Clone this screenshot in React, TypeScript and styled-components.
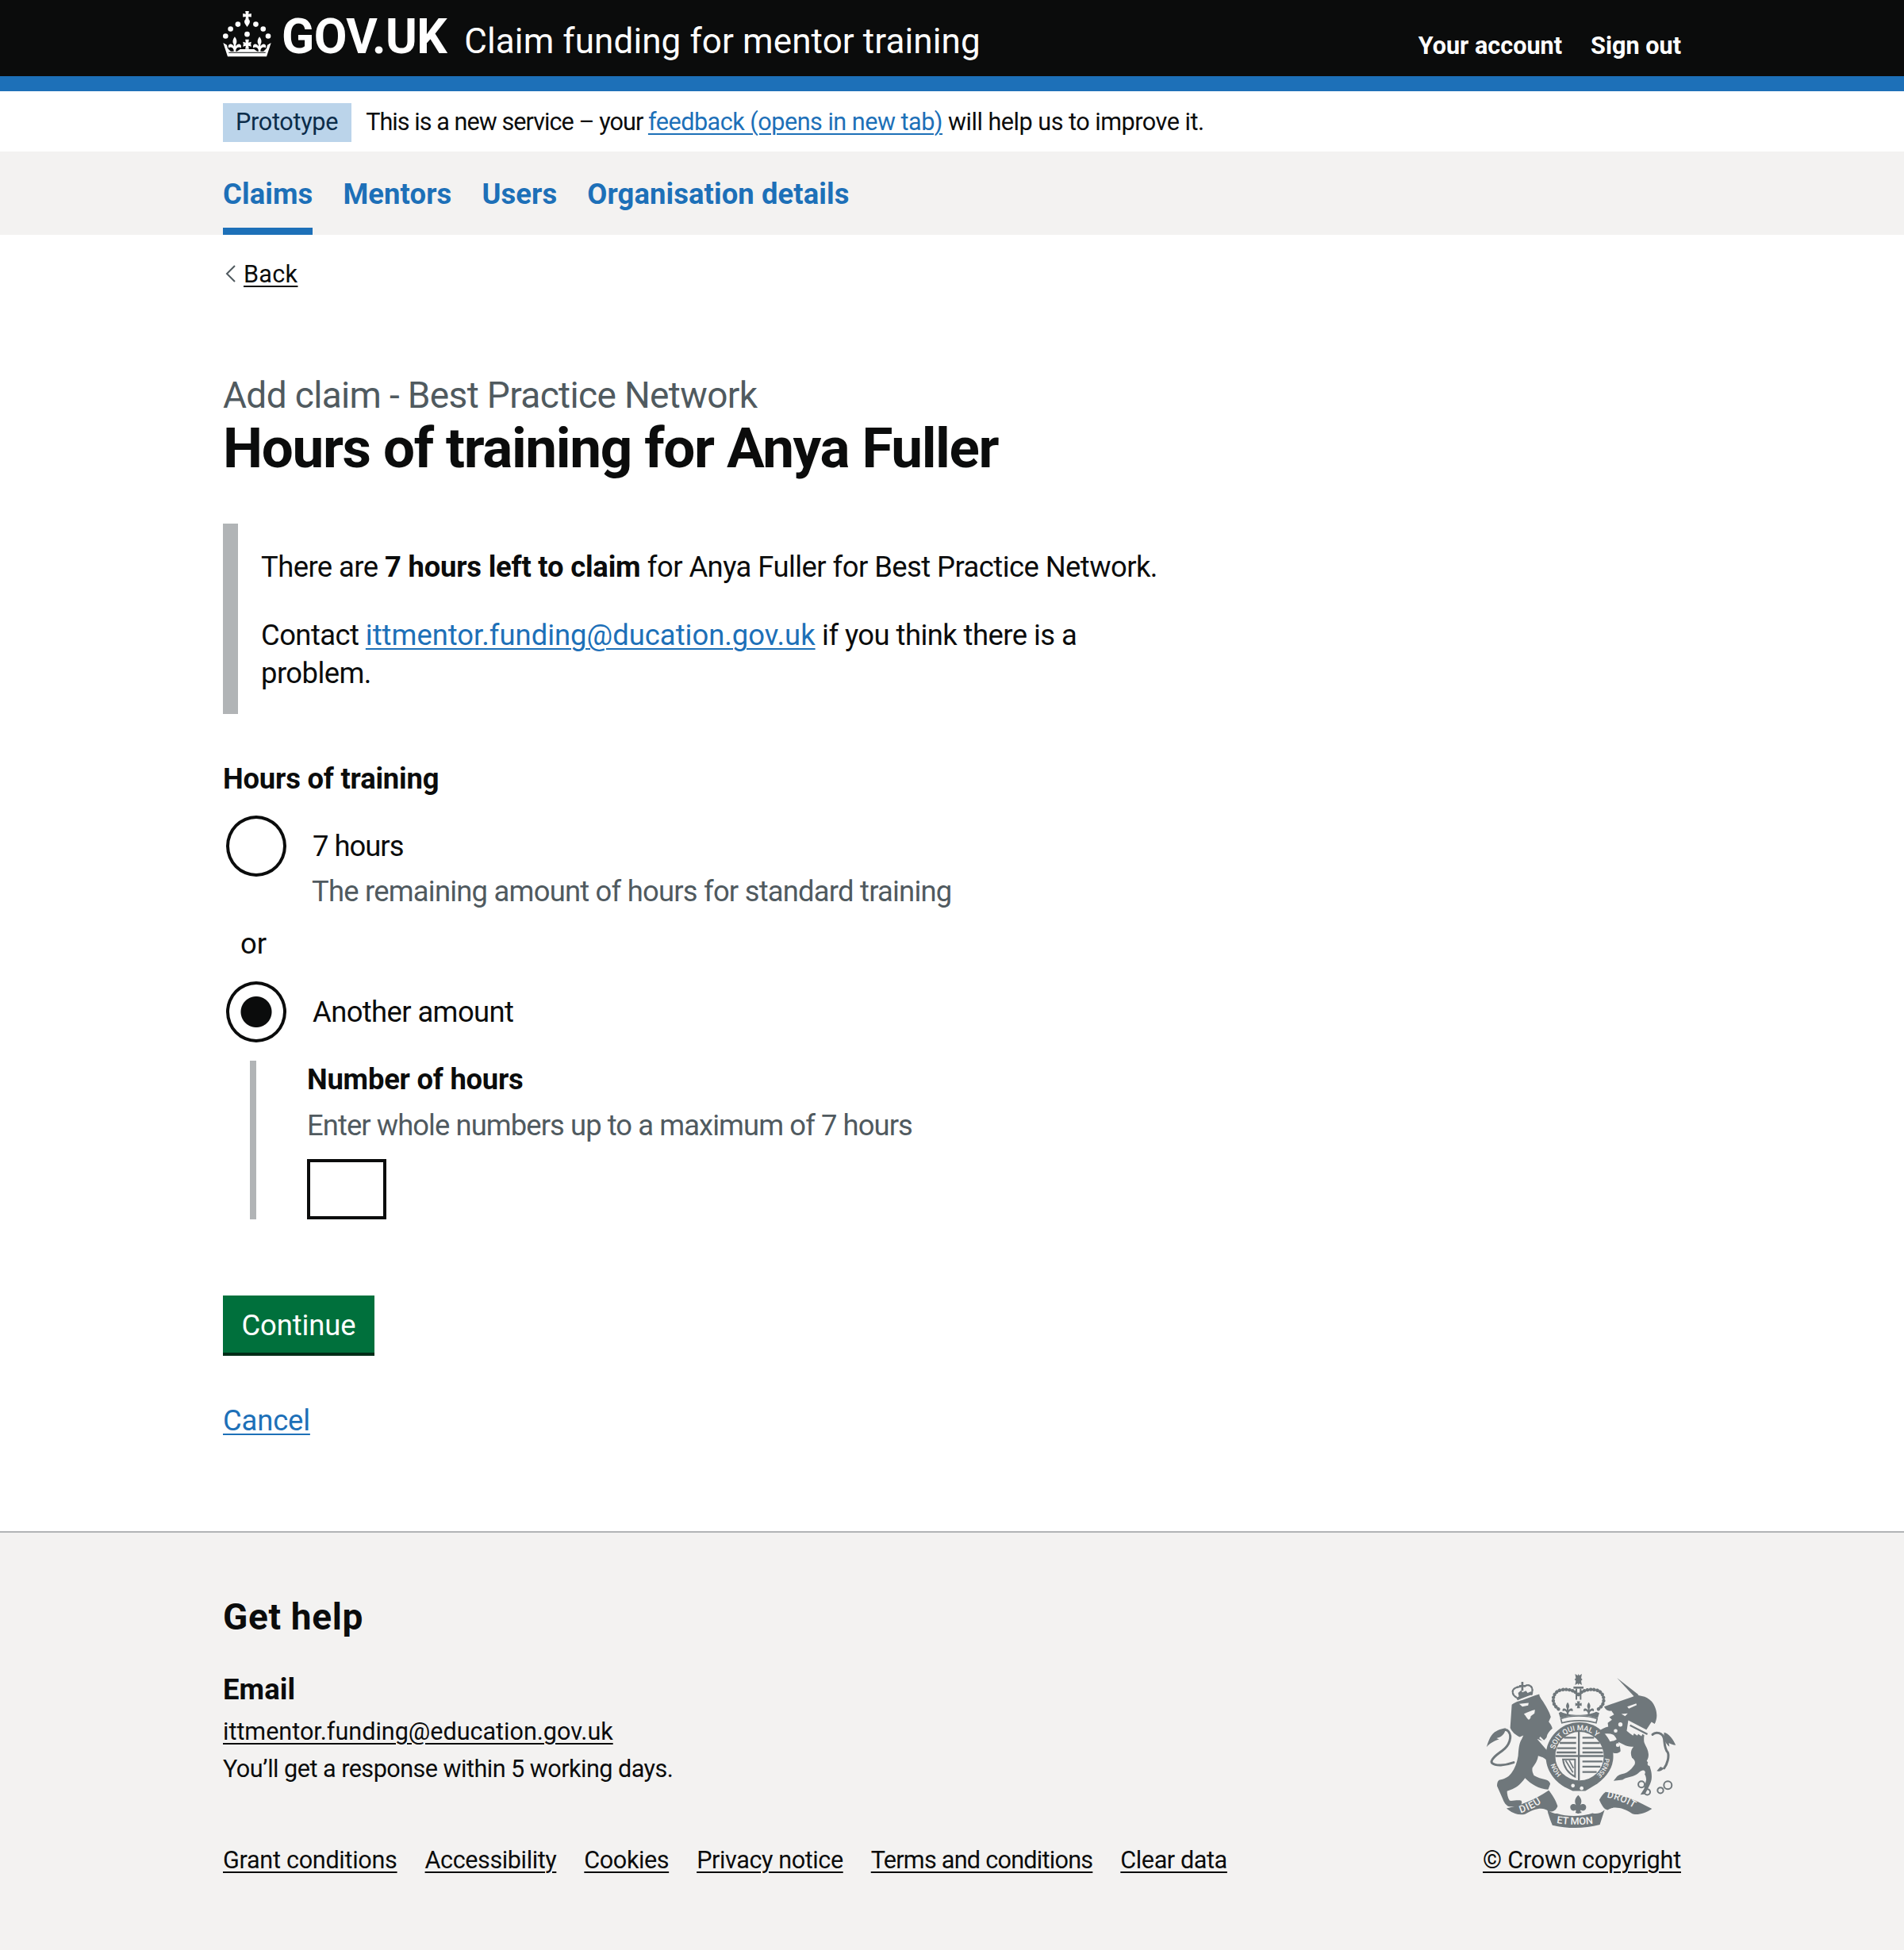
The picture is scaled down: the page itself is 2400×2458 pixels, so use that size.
import React from 'react'
import styled, { createGlobalStyle } from 'styled-components'

const GlobalStyle = createGlobalStyle`
  body {
    margin: 0;
    background: #fff;
    color: #0b0c0c;
    font-family: Roboto, "Liberation Sans", Arial, sans-serif;
  }
`

const Container = styled.div`
  width: 1838px;
  margin: 0 auto;
`

const Header = styled.header`
  background: #0b0c0c;
  height: 96px;
  border-bottom: 19px solid #1d70b8;
`

const HeaderInner = styled(Container)`
  display: flex;
  justify-content: space-between;
  height: 96px;
`

const Brand = styled.div`
  display: flex;
  align-items: flex-start;
  color: #fff;
`

const Crown = styled.svg`
  width: 63px;
  height: 62px;
  margin: 12px 12px 0 -1px;
  flex-shrink: 0;
`

const LogoText = styled.span`
  font-size: 60.5px;
  line-height: 96px;
  font-weight: 700;
  letter-spacing: -0.5px;
  margin-top: -1px;
`

const ServiceName = styled.span`
  font-size: 44px;
  line-height: 104px;
  margin-left: 22px;
  letter-spacing: 0.1px;
`

const AccountNav = styled.nav`
  display: flex;
  gap: 36px;
  padding-top: 38px;
`

const AccountLink = styled.a`
  color: #fff;
  font-size: 30.6px;
  line-height: 40px;
  font-weight: 700;
  letter-spacing: 0;
`

const PhaseBanner = styled(Container)`
  display: flex;
  align-items: center;
  height: 76px;
  font-size: 30.6px;
  letter-spacing: -0.96px;
`

const Tag = styled.strong`
  display: block;
  background: #bbd4ea;
  color: #0c2d4a;
  font-weight: 400;
  height: 49px;
  line-height: 47px;
  margin-top: 2px;
  padding: 0 17px 0 16px;
  margin-right: 18px;
  letter-spacing: -0.3px;
`

const BannerTail = styled.span`
  letter-spacing: -0.5px;
`

const Link = styled.a<{ $muted?: boolean; $spacing?: string }>`
  color: ${p => (p.$muted ? '#0b0c0c' : '#1d70b8')};
  text-decoration: underline;
  text-decoration-thickness: 2px;
  text-underline-offset: 4px;
  ${p => (p.$spacing ? `letter-spacing: ${p.$spacing};` : '')}
`

const ServiceNav = styled.div`
  background: #f3f2f1;
  height: 105px;
`

const ServiceNavList = styled(Container)`
  display: flex;
  gap: 38px;
  height: 105px;
`

const NavItem = styled.a<{ $active?: boolean }>`
  display: block;
  box-sizing: border-box;
  height: 105px;
  padding-top: 30px;
  font-size: 36.4px;
  line-height: 48px;
  font-weight: 700;
  letter-spacing: 0.1px;
  color: #1d70b8;
  border-bottom: 9.6px solid ${p => (p.$active ? '#1d70b8' : 'transparent')};
`

const BackRow = styled.div`
  display: flex;
  align-items: center;
  margin-top: 29px;
  height: 40px;
  font-size: 30.6px;
  letter-spacing: 0.3px;
`

const BackChevron = styled.svg`
  width: 14px;
  height: 24px;
  margin-left: 3px;
  margin-right: 9px;
`

const Caption = styled.div`
  margin-top: 106px;
  font-size: 46px;
  line-height: 54px;
  color: #505a5f;
  letter-spacing: -0.65px;
`

const Title = styled.h1`
  margin: 0;
  font-size: 71px;
  line-height: 80px;
  font-weight: 700;
  letter-spacing: -1.35px;
`

const Inset = styled.div`
  margin-top: 55px;
  height: 240px;
  box-sizing: border-box;
  border-left: 19px solid #b1b4b6;
  padding: 31px 0 27px 29px;
  font-size: 36.4px;
  line-height: 48px;
  letter-spacing: -0.55px;
`

const InsetText = styled.p<{ $gap?: boolean }>`
  margin: ${p => (p.$gap ? '38px' : '0')} 0 0;
  strong { font-weight: 700; letter-spacing: -0.2px; }
`

const Legend = styled.div`
  margin-top: 59px;
  font-size: 36.4px;
  line-height: 46px;
  font-weight: 700;
  letter-spacing: -0.2px;
`

const RadioRow = styled.div`
  display: flex;
  align-items: center;
  margin-top: 23px;
  height: 77px;
`

const Radio = styled.span<{ $checked?: boolean }>`
  display: block;
  box-sizing: border-box;
  width: 76px;
  height: 77px;
  margin-left: 4px;
  margin-right: 1px;
  border: 4px solid #0b0c0c;
  border-radius: 50%;
  background: ${p => (p.$checked
    ? 'radial-gradient(circle, #0b0c0c 0, #0b0c0c 19px, #fff 20px)'
    : '#fff')};
`

const RadioLabel = styled.span<{ $spacing: string }>`
  margin-left: 32px;
  font-size: 36.4px;
  letter-spacing: ${p => p.$spacing};
`

const RadioHint = styled.div`
  margin-left: 112px;
  font-size: 36.4px;
  line-height: 37px;
  color: #505a5f;
  letter-spacing: -0.78px;
`

const Divider = styled.div`
  margin: 24px 0 0 22px;
  font-size: 36.4px;
  line-height: 48px;
`

const Conditional = styled.div`
  margin: 23px 0 0 34px;
  padding-left: 64px;
  border-left: 8px solid #b1b4b6;
  height: 200px;
`

const FieldLabel = styled.div`
  font-size: 36.4px;
  line-height: 48px;
  font-weight: 700;
  letter-spacing: -0.23px;
`

const FieldHint = styled.div`
  margin-top: 10px;
  font-size: 36.4px;
  line-height: 48px;
  color: #505a5f;
  letter-spacing: -0.93px;
`

const HoursInput = styled.input`
  display: block;
  box-sizing: border-box;
  margin-top: 18px;
  width: 100px;
  height: 76px;
  border: 4px solid #0b0c0c;
  border-radius: 0;
  background: #fff;
  padding: 0;
`

const Button = styled.button`
  display: block;
  margin-top: 96px;
  width: 191px;
  height: 72px;
  padding: 3px 0 0;
  border: 0;
  border-radius: 0;
  background: #00703c;
  box-shadow: 0 4px 0 #002d18;
  color: #fff;
  font-family: inherit;
  font-size: 36.4px;
  letter-spacing: -0.1px;
`

const CancelRow = styled.div`
  margin-top: 63px;
  font-size: 36.4px;
  line-height: 46px;
  letter-spacing: -0.15px;
`

const Footer = styled.footer`
  margin-top: 116px;
  height: 528px;
  box-sizing: border-box;
  background: #f3f2f1;
  border-top: 2px solid #b1b4b6;
`

const FooterInner = styled(Container)`
  display: flex;
  justify-content: space-between;
  align-items: flex-end;
  height: 433px;
`

const FooterMain = styled.div`
  padding-top: 77px;
`

const FooterTitle = styled.h2`
  margin: 0;
  font-size: 46px;
  line-height: 56px;
  font-weight: 700;
  letter-spacing: 0.65px;
`

const FooterLabel = styled.div`
  margin-top: 40px;
  font-size: 36.4px;
  line-height: 48px;
  font-weight: 700;
  letter-spacing: 0.1px;
`

const FooterLine = styled.div<{ $gap: number; $spacing: string }>`
  margin-top: ${p => p.$gap}px;
  font-size: 30.6px;
  line-height: 40px;
  letter-spacing: ${p => p.$spacing};
`

const FooterLinks = styled.div`
  display: flex;
  gap: 35px;
  margin-top: 75px;
  font-size: 30.6px;
  line-height: 40px;
  letter-spacing: -0.42px;
`

const FooterAside = styled.div`
  display: flex;
  flex-direction: column;
  align-items: flex-end;
  font-size: 30.6px;
  line-height: 40px;
  letter-spacing: -0.2px;
`

const Crest = styled.svg`
  width: 241px;
  height: 196px;
  margin-right: 5px;
  margin-bottom: 20px;
`

const Fleur = ({ x, y, s = 1 }: { x: number; y: number; s?: number }) => (
  <path
    transform={`translate(${x} ${y}) scale(${s})`}
    d="M0-30c8 10 10 20 4 30v7c3-6 10-10 15-8 6 2 7 9 4 14-3-3-8-4-13-1-3 2-5 5-6 9v9H-4v-9c-1-4-3-7-6-9-5-3-10-2-13 1-3-5-2-12 4-14 5-2 12 2 15 8V0c-6-10-4-20 4-30z"
  />
)

const CrownLogo = () => (
  <Crown viewBox="15 20 190 185" fill="#fff" aria-hidden>
    <path d="M103 25h14l-2 11 11-2v14l-11-2 1 10c5 4 6 11 2 17l-8 12-8-12c-4-6-3-13 2-17l1-10-11 2V34l11 2z" />
    <circle cx="75" cy="75" r="10" />
    <circle cx="143" cy="75" r="10" />
    <circle cx="47" cy="93" r="10" />
    <circle cx="171" cy="93" r="10" />
    <circle cx="28" cy="120" r="10" />
    <circle cx="190" cy="120" r="10" />
    <circle cx="110" cy="113" r="10" />
    <Fleur x={63} y={152} />
    <Fleur x={157} y={152} />
    <path d="M103 133h14l-2 12 11-3-2 9 2 9-11-3 2 12h-14l2-12-11 3 2-9-2-9 11 3z" />
    <path d="M19 146l14 8 3 12c3 4 7 8 12 12h23c4-2 8-4 12-8h54c4 4 8 6 12 8h23c5-4 9-8 12-12l3-12 14-8-17 52H36z" />
    <path d="M40 184h140v-3H40z" fill="#0b0c0c" />
  </Crown>
)

const CrestLogo = () => (
  <Crest viewBox="100 85 725 590" fill="#6f777b" aria-hidden>
    {/* lion */}
    <path d="M198 205c14-12 30-14 46-20 20-6 38-14 58-20 2 14 12 22 18 34 10 16 20 32 26 52l-8 18c6 8 12 16 14 26-12 10-20 20-22 34-2 4-8 10-14 14-10-2-14-6-22-8l52 60 22 24-18 14c-10-8-22-22-34-28l-18-6c-2 18-12 32-22 46-2 12 2 20 6 28 14 8 28 12 44 16 10 2 16 8 18 16l-8 22c-18-2-34-6-48-14-16-8-28-18-40-30-12 18-28 34-48 42l-20 8c0 10 2 24 10 36 12 2 30-4 44 0 4 6 2 14-4 18-14 4-30 6-44 4-10-4-18-16-22-28l-22-50c0-10 2-18 8-22 18-4 34-10 46-26 14-18 22-40 26-66 2-22 2-46 14-64l6-14-14 6c-16-6-30-20-36-34z" />
    <path d="M226 202l36-4-2 10-22 4zM244 240c10-6 30-14 42-16l-2 14-14 10c0 8-4 12-8 14-6-4-10-14-18-22z" fill="#f3f2f1" />
    <path d="M306 326l46 44-4 4-46-42z" fill="#f3f2f1" />
    <path d="M205 424c-34 12-68 14-82 2-8-10 12-28 38-46 28-20 40-54 24-74-8-10-26-6-36 8" fill="none" stroke="#6f777b" strokeWidth="9" strokeLinecap="round" />
    <path d="M102 366c6-16 10-40 32-58 10-6 26-14 42-14-4 14-8 26-24 34l-12 4 10 4c-14 4-36 14-48 30z" />
    <g fill="none" stroke="#6f777b" strokeWidth="7" strokeDasharray="7 5" strokeLinecap="round">
      <path d="M214 176c-14-8-18-26-4-34 6-4 14-4 20-6M248 134c12-8 26-2 28 14 0 8-2 14-4 20" />
    </g>
    <path d="M214 178c18-8 38-14 60-22l2 10c-18 6-36 12-56 22z" />
    <path d="M222 160l12-10 4 8 14-6 6 8 14-6-2 10-44 14z" />
    <path d="M226 130h8v-12h8v12h8v8h-8v14h-8v-14h-8z" />
    {/* unicorn */}
    <path d="M597 103l82 64-14 10z" />
    <path d="M655 175L672 168l20 4c14 2 26 10 36 20 12 14 20 34 20 54 0 12-4 24-8 32l-12-8-22 34c-6 12-8 28-6 42 4 14 14 24 16 42 2 10 0 20-6 30 8 10 12 20 14 30 4 12 6 26 4 40-4 20-14 34-24 56l-18 2 14-22 8-34c0-14-6-28-20-34-8 6-14 14-26 18-16 6-30 6-44 16l-34 4 14-18c10-8 24-8 36-14 14-8 22-18 30-30 4-10 0-20-10-26-6-14-6-28 6-42-14 2-26-2-38-8l-20-10c4 12 10 26 8 36-8 8-18 8-26 6-14-10-26-20-34-34-2-6 0-12 6-14 12 8 28 4 40-4-4-8-8-14-14-18-10-4-22-4-34-2l-18-12c10-8 22-14 34-16l-2-14 16-12-10-10 18-10-10-14c-14 2-22-4-28-16L655 175z" />
    <path d="M640 264l84 44-4 16-10-6-4 6-12-8-4 8-12-8-4 6-12-8-4 8-12-8-12-10z" fill="#f3f2f1" />
    <path d="M648 280l66 34-3 6-66-34z" />
    <path d="M636 212l34-12 2 6-30 14zM614 240l24-2-10 10z" fill="#f3f2f1" />
    <path d="M732 318c12-12 40-8 44 18 2 20 2 38 14 50 6 16-2 44-14 60" fill="none" stroke="#6f777b" strokeWidth="9" strokeLinecap="round" />
    <path d="M776 310c18 4 34 26 44 48-10 0-20-4-26-8l2 14c-14-10-24-30-20-54z" />
    <path d="M776 446c-8 8-18 14-28 10l14-16z" />
    <g fill="none" stroke="#6f777b" strokeWidth="6">
      <circle cx="690" cy="507" r="12" />
      <circle cx="712" cy="536" r="11" />
      <circle cx="762" cy="530" r="11" />
      <circle cx="790" cy="510" r="15" />
    </g>
    <g fill="#f3f2f1">
      <circle cx="728" cy="384" r="9" />
      <circle cx="720" cy="430" r="7" />
      <circle cx="696" cy="462" r="8" />
      <circle cx="610" cy="280" r="8" />
      <circle cx="592" cy="304" r="7" />
      <circle cx="600" cy="358" r="7" />
    </g>
    {/* crown */}
    <path d="M438 88l10 6 3-6 3 6 10-6-3 16 5 5-5 5 3 16-10-6-3 6-3-6-10 6 3-16-5-5 5-5z" />
    <path d="M432 136h38v8h-38z" />
    <path d="M440 144h6v42h-6zM456 144h6v42h-6z" />
    <g fill="none" stroke="#6f777b" strokeWidth="13" strokeDasharray="1 11.5" strokeLinecap="round">
      <path d="M450 166c-14-14-36-22-62-18-24 4-36 24-32 46 2 12 10 20 20 28" />
      <path d="M452 166c14-14 36-22 62-18 24 4 36 24 32 46-2 12-10 20-20 28" />
    </g>
    <Fleur x={410} y={220} s={0.8} />
    <Fleur x={490} y={220} s={0.8} />
    <path d="M445 192h12l-2 8 8-2v12l-8-2 2 10h-12l2-10-8 2v-12l8 2z" />
    <path d="M376 236l8-4c32 16 100 16 134 0l12 4-6 20c-44-14-98-14-142 0z" />
    <path d="M384 258c36-14 100-14 138 0l-4 16c-36-12-92-12-130 0z" fill="none" stroke="#6f777b" strokeWidth="5" />
    {/* garter and shield */}
    <path d="M455 272c-70 0-128 57-128 128 0 50 30 92 70 116l32 16h48l46-28c38-30 60-62 60-104 0-71-58-128-128-128z" />
    <circle cx="455" cy="400" r="92" fill="#f3f2f1" />
    <path id="garterArc" d="M361 375A97 97 0 0 1 549 375" fill="none" />
    <path id="garterLeft" d="M386 469A97 97 0 0 1 359 417" fill="none" />
    <path id="garterRight" d="M552 408A97 97 0 0 1 503 484" fill="none" />
    <text fontSize="28" fontFamily="Roboto, sans-serif" fontWeight="500" fill="#f3f2f1">
      <textPath href="#garterArc">SOIT QUI MAL Y</textPath>
    </text>
    <text fontSize="24" fontFamily="Roboto, sans-serif" fontWeight="500" fill="#f3f2f1">
      <textPath href="#garterLeft">HON</textPath>
    </text>
    <text fontSize="24" fontFamily="Roboto, sans-serif" fontWeight="500" fill="#f3f2f1">
      <textPath href="#garterRight">PENSE</textPath>
    </text>
    <path d="M449 308h7v88h91v7h-91v89h-7v-89h-86v-7h86z" />
    <g strokeWidth="7" fill="none" stroke="#6f777b">
      <path d="M396 330h46M380 350h62M370 370h72M368 386h74M466 330h44M466 350h66M466 370h76M466 386h78M466 420h76M466 440h68M466 460h54" />
    </g>
    <path d="M392 412h46v66c-24-12-42-34-46-66z" fill="none" stroke="#6f777b" strokeWidth="6" />
    <path d="M402 416l28 46M416 416l16 30" fill="none" stroke="#6f777b" strokeWidth="5" />
    <circle cx="430" cy="512" r="7" fill="#f3f2f1" />
    <circle cx="463" cy="522" r="7" fill="#f3f2f1" />
    {/* ribbon */}
    <path d="M178 598c46-8 104-30 160-68 12 14 26 36 34 60-8 18-18 22-34 20-18-18-50-14-90 10-26 6-52-6-70-22z" />
    <path d="M334 604c-2 4 10 40 18 58 60 14 120 14 180-2l18-56c-14 14-34 16-46 12-36 14-100 14-134 2-10 0-24-4-36-14z" />
    <path d="M530 566c6-10 14-24 24-30 64 8 126 36 176 64-26 18-60 26-76 18-32-22-70-30-92-14-14 0-24-20-32-38z" />
    <path id="ribbonLeft" d="M232 616c32-10 68-28 100-54" fill="none" />
    <path id="ribbonMiddle" d="M368 654c50 8 108 8 166-2" fill="none" />
    <path id="ribbonRight" d="M558 556c44 10 84 26 122 54" fill="none" />
    <text fontSize="38" fontFamily="Roboto, sans-serif" fontWeight="500" fill="#f3f2f1" letterSpacing="2">
      <textPath href="#ribbonLeft">DIEU</textPath>
    </text>
    <text fontSize="38" fontFamily="Roboto, sans-serif" fontWeight="500" fill="#f3f2f1">
      <textPath href="#ribbonMiddle">ET MON</textPath>
    </text>
    <text fontSize="36" fontFamily="Roboto, sans-serif" fontWeight="500" fill="#f3f2f1" letterSpacing="2">
      <textPath href="#ribbonRight">DROIT</textPath>
    </text>
    <path d="M450 548c12 12 16 24 8 38 8-8 24-4 22 10-2 12-14 14-20 8l-6 14h-8l-6-14c-6 6-18 4-20-8-2-14 14-18 22-10-8-14-4-26 8-38z" />
    <path d="M440 610h22v6h-22z" />
  </Crest>
)

export default function App() {
  return (
    <>
      <GlobalStyle />
      <Header>
        <HeaderInner>
          <Brand>
            <CrownLogo />
            <LogoText>GOV.UK</LogoText>
            <ServiceName>Claim funding for mentor training</ServiceName>
          </Brand>
          <AccountNav>
            <AccountLink>Your account</AccountLink>
            <AccountLink>Sign out</AccountLink>
          </AccountNav>
        </HeaderInner>
      </Header>
      <PhaseBanner>
        <Tag>Prototype</Tag>
        <span>
          This is a new service – your <Link href="#" $spacing="-0.5px">feedback (opens in new tab)</Link>
          <BannerTail> will help us to improve it.</BannerTail>
        </span>
      </PhaseBanner>
      <ServiceNav>
        <ServiceNavList>
          <NavItem $active>Claims</NavItem>
          <NavItem>Mentors</NavItem>
          <NavItem>Users</NavItem>
          <NavItem>Organisation details</NavItem>
        </ServiceNavList>
      </ServiceNav>
      <Container>
        <BackRow>
          <BackChevron viewBox="0 0 14 24" aria-hidden>
            <path d="M12 2L2 12l10 10" fill="none" stroke="#505a5f" strokeWidth="2" />
          </BackChevron>
          <Link href="#" $muted>Back</Link>
        </BackRow>
        <Caption>Add claim - Best Practice Network</Caption>
        <Title>Hours of training for Anya Fuller</Title>
        <Inset>
          <InsetText>
            There are <strong>7 hours left to claim</strong> for Anya Fuller for Best Practice Network.
          </InsetText>
          <InsetText $gap>
            Contact <Link href="#" $spacing="0">ittmentor.funding@ducation.gov.uk</Link> if you think there is a
            <br />
            problem.
          </InsetText>
        </Inset>
        <Legend>Hours of training</Legend>
        <RadioRow>
          <Radio />
          <RadioLabel $spacing="-1px">7 hours</RadioLabel>
        </RadioRow>
        <RadioHint>The remaining amount of hours for standard training</RadioHint>
        <Divider>or</Divider>
        <RadioRow>
          <Radio $checked />
          <RadioLabel $spacing="-0.6px">Another amount</RadioLabel>
        </RadioRow>
        <Conditional>
          <FieldLabel>Number of hours</FieldLabel>
          <FieldHint>Enter whole numbers up to a maximum of 7 hours</FieldHint>
          <HoursInput />
        </Conditional>
        <Button>Continue</Button>
        <CancelRow>
          <Link href="#">Cancel</Link>
        </CancelRow>
      </Container>
      <Footer>
        <FooterInner>
          <FooterMain>
            <FooterTitle>Get help</FooterTitle>
            <FooterLabel>Email</FooterLabel>
            <FooterLine $gap={9} $spacing="-0.03px">
              <Link href="#" $muted>ittmentor.funding@education.gov.uk</Link>
            </FooterLine>
            <FooterLine $gap={7} $spacing="-0.53px">You’ll get a response within 5 working days.</FooterLine>
            <FooterLinks>
              <Link href="#" $muted $spacing="-0.3px">Grant conditions</Link>
              <Link href="#" $muted>Accessibility</Link>
              <Link href="#" $muted>Cookies</Link>
              <Link href="#" $muted>Privacy notice</Link>
              <Link href="#" $muted $spacing="-0.75px">Terms and conditions</Link>
              <Link href="#" $muted>Clear data</Link>
            </FooterLinks>
          </FooterMain>
          <FooterAside>
            <CrestLogo />
            <Link href="#" $muted>© Crown copyright</Link>
          </FooterAside>
        </FooterInner>
      </Footer>
    </>
  )
}
